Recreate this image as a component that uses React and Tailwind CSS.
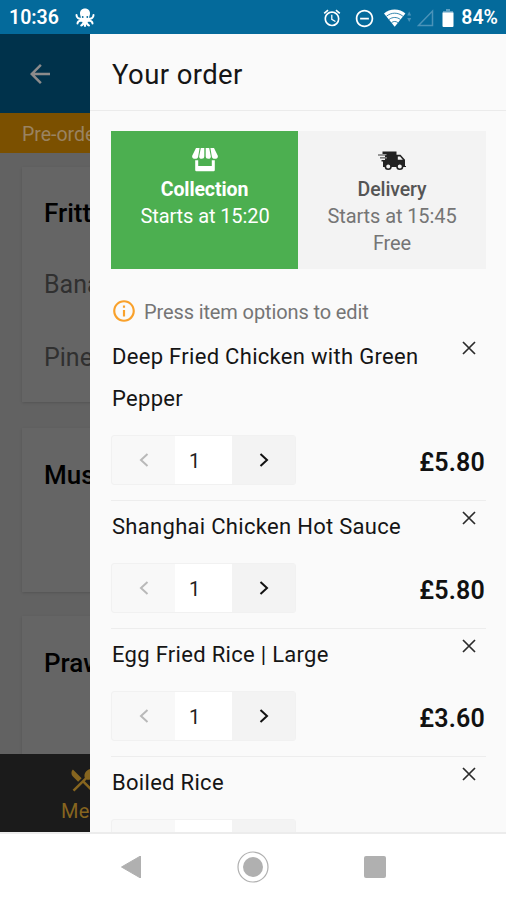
import React, { useState } from 'react';
import { MdAlarm, MdRemoveCircleOutline, MdArrowBack, MdInfoOutline, MdRestaurantMenu } from 'react-icons/md';

const initialItems = [
  { id: 1, name: 'Deep Fried Chicken with Green Pepper', price: 5.8, qty: 1 },
  { id: 2, name: 'Shanghai Chicken Hot Sauce', price: 5.8, qty: 1 },
  { id: 3, name: 'Egg Fried Rice | Large', price: 3.6, qty: 1 },
  { id: 4, name: 'Boiled Rice', price: 2.8, qty: 1 },
];

function OctopusIcon() {
  return (
    <svg width="20" height="20" viewBox="0 0 20 20" fill="none" stroke="white" strokeWidth="2" strokeLinecap="round">
      <path d="M10 .5C6.800.5 5 2.700 5 5.200c0 2 .8 3.300 1 4.800l.5 3.500h7L14 10c.2-1.500 1-2.800 1-4.800C15 2.700 13.200.5 10 .5z" fill="white" stroke="none" />
      <path d="M6.500 10.500C3.500 11.500 1.500 9.500 1.500 7M18.500 7c0 2.500-2 4.500-5 3.500M7.500 12.500C5 12.500 2.500 13 2.500 15.500M12.500 12.500c2.500 0 5 .5 5 3M8.500 13c.2 2-.5 4-2.300 4.500M10 13.500v4.500M11.500 13c0 2 .5 4 2.500 4.500" />
      <circle cx="7.700" cy="9" r=".9" fill="#046a9b" stroke="none" />
      <circle cx="12.300" cy="9" r=".9" fill="#046a9b" stroke="none" />
    </svg>
  );
}

function WifiIcon() {
  return (
    <svg width="28" height="18" viewBox="0 0 28 18">
      <path d="M0 4.500C3 1.800 6.500.5 10.700.5s7.700 1.300 10.700 4L10.700 17.800z" fill="white" />
      <path d="M2.500 7.200c5-4 11.400-4 16.400 0M5 10.500c3.500-2.700 7.900-2.700 11.400 0M7.500 13.600c2-1.500 4.400-1.500 6.400 0" fill="none" stroke="#046a9b" strokeWidth=".8" />
      <path d="M25.200 2.500l2 4h-4zM25.200 13l2-4h-4z" fill="#4a93b9" />
    </svg>
  );
}

function BatteryIcon() {
  return (
    <svg width="12" height="20" viewBox="0 0 12 20">
      <path d="M4 1h4v2h3v3H1V3h3z" fill="#5f9fc2" />
      <path d="M.5 4.500h11V18a1 1 0 0 1-1 1h-9a1 1 0 0 1-1-1z" fill="white" />
    </svg>
  );
}

function StoreIcon() {
  return (
    <svg width="26" height="24" viewBox="0 0 26 24" fill="currentColor">
      <path d="M4 0h3.600L6.200 8.500C6 10 5 10.800 3.200 10.800 1 10.800-.2 9.500.2 7.800zM8.800 0h3.500v8.300c0 1.700-.9 2.500-2.700 2.500s-2.600-1-2.400-2.500zM13.700 0h3.500l1.600 8.300c.2 1.500-.6 2.500-2.400 2.500s-2.700-.8-2.700-2.500zM18.400 0H22l3.800 7.800c.4 1.700-.8 3-3 3-1.800 0-2.800-.8-3-2.300z" />
      <path d="M3.200 12.300h3V18h13.600v-5.700h3V22a1.200 1.200 0 0 1-1.200 1.200H4.400A1.200 1.200 0 0 1 3.200 22z" />
    </svg>
  );
}

function TruckIcon() {
  return (
    <svg width="28" height="24" viewBox="0 0 28 24">
      <path d="M4.500 3.500h14v3.200h4l4.500 5V18h1v1H5v-5.500H3.500V12H7v-1.500H2V9h5V7.500H0V6h4.500z" fill="#222" />
      <path d="M19.800 8.500h2.300l2.700 3.200h-5z" fill="#f3f3f3" />
      <path d="M0 6.700h8.500M2 9.900h7" stroke="#f3f3f3" strokeWidth=".7" />
      <circle cx="10.200" cy="18.500" r="2.800" fill="#f3f3f3" stroke="#222" strokeWidth="1.600" />
      <circle cx="21.800" cy="18.500" r="2.800" fill="#f3f3f3" stroke="#222" strokeWidth="1.600" />
    </svg>
  );
}

function Chevron({ dir }) {
  return (
    <svg width="10" height="14" viewBox="0 0 10 14" fill="none" stroke="currentColor" strokeWidth="2">
      <path d={dir === 'left' ? 'M8.500 1L2 7l6.500 6' : 'M1.500 1L8 7l-6.500 6'} />
    </svg>
  );
}

function StatusBar() {
  return (
    <div className="h-[34px] shrink-0 bg-[#046a9b] text-white flex items-center pl-[9px] pr-2 pt-[2px]">
      <span className="text-[19.500px] font-semibold">10:36</span>
      <div className="ml-[16px]"><OctopusIcon /></div>
      <div className="ml-auto flex items-center">
        <MdAlarm className="size-5 mr-3" />
        <MdRemoveCircleOutline className="size-[21px] mr-[9px]" />
        <WifiIcon />
        <svg width="17" height="18" viewBox="0 0 17 18" className="ml-[5px] mr-[8px]">
          <path d="M15.500 2v14.500H1.500z" fill="none" stroke="#4a93b9" strokeWidth="1.500" />
        </svg>
        <BatteryIcon />
        <span className="ml-[7px] text-[19.500px] font-semibold">84%</span>
      </div>
    </div>
  );
}

// Menu page left behind the drawer, already dimmed
function MenuPage() {
  return (
    <div className="w-[90px] shrink-0 overflow-hidden flex flex-col bg-[#626262] whitespace-nowrap">
      <div className="h-[79px] shrink-0 bg-[#00324b] flex items-center pl-[25px]">
        <MdArrowBack className="size-[30px] text-[#8b8b8b]" />
      </div>
      <div className="h-10 shrink-0 bg-[#7b5000] text-[#9a8361] text-[19.500px] pl-[22px] pt-[3px] flex items-center">Pre-order</div>
      <div className="flex-1 min-h-0 overflow-hidden pl-[22px] pt-[14px]">
        <div className="w-80 h-[235px] bg-[#656565] shadow-sm pl-[22px]">
          <h2 className="text-[26px] font-medium leading-[32px] pt-[30px]">Fritters</h2>
          <p className="text-[25px] text-[#303030] leading-[32px] mt-[40px]">Banana Fritter</p>
          <p className="text-[25px] text-[#303030] leading-[32px] mt-[41px]">Pineapple Fritter</p>
        </div>
        <div className="w-80 h-[164px] mt-[26px] bg-[#656565] shadow-sm pl-[22px]">
          <h2 className="text-[26px] font-medium leading-[32px] pt-[31px]">Mushroom</h2>
        </div>
        <div className="w-80 h-[164px] mt-[24px] bg-[#656565] shadow-sm pl-[22px]">
          <h2 className="text-[26px] font-medium leading-[32px] pt-[31px]">Prawn</h2>
        </div>
      </div>
      <div className="h-[78px] shrink-0 bg-[#1b1b1b] text-[#86651f] pl-[61px] pt-[11px]">
        <MdRestaurantMenu className="size-[30px] ml-[7px]" />
        <p className="text-[20px] leading-[28px] tracking-[0.2px] pt-[2px]">Menu</p>
      </div>
    </div>
  );
}

function OrderItem({ item, onQty, onRemove }) {
  return (
    <div className="border-b border-[#ededed] pt-[5px] pb-[15px]">
      <div className="flex items-start justify-between">
        <h3 className="w-[320px] pl-px text-[22px] leading-[42px] tracking-[0.3px] text-[#151515]">{item.name}</h3>
        <button onClick={() => onRemove(item.id)} className="mt-[5px] mr-[10px] text-[#2b2b2b]">
          <svg width="14" height="14" viewBox="0 0 14 14" stroke="currentColor" strokeWidth="1.700" className="block">
            <path d="M1 1l12 12M13 1L1 13" />
          </svg>
        </button>
      </div>
      <div className="mt-[15px] flex items-center justify-between">
        <div className="w-[185px] h-[50px] flex border border-[#f1f1f1] rounded-[3px] bg-[#f8f8f8]">
          <button onClick={() => onQty(item.id, -1)} className="w-[63px] flex items-center justify-center text-[#b9b9b9]">
            <Chevron dir="left" />
          </button>
          <div className="w-[57px] bg-white pl-[14px] pt-[2px] flex items-center text-[20px] text-[#222]">{item.qty}</div>
          <button onClick={() => onQty(item.id, 1)} className="flex-1 flex items-center justify-center bg-[#f3f3f3] text-[#111]">
            <Chevron dir="right" />
          </button>
        </div>
        <span className="text-[25px] tracking-[0.2px] font-semibold text-[#111] pt-[5px] pr-px">£{item.price.toFixed(2)}</span>
      </div>
    </div>
  );
}

function OrderDrawer() {
  const [items, setItems] = useState(initialItems);
  const [method, setMethod] = useState('collection');

  const changeQty = (id, by) => {
    setItems(items.map((x) => (x.id === id ? { ...x, qty: Math.max(1, x.qty + by) } : x)));
  };
  const removeItem = (id) => setItems(items.filter((x) => x.id !== id));
  const active = 'bg-[#4caf50] text-white';
  const idle = 'bg-[#f3f3f3] text-[#757575]';

  return (
    <div className="flex-1 min-w-0 overflow-hidden bg-[#fafafa]">
      <div className="h-[77px] border-b border-[#ebebeb] pl-[22px] pt-[5px] flex items-center">
        <h1 className="text-[27.500px] tracking-[0.4px] text-[#151515]">Your order</h1>
      </div>
      <div className="pl-[21px] pr-[20px] pt-5">
        <div className="flex h-[138px] text-[20px] leading-[27px] text-center tracking-[-0.1px]">
          <button onClick={() => setMethod('collection')} className={`w-[187px] flex flex-col items-center pt-[17px] ${method === 'collection' ? active : idle}`}>
            <StoreIcon />
            <span className="font-bold mt-[4px] text-[19.500px]">Collection</span>
            <span className="pl-px">Starts at 15:20</span>
          </button>
          <button onClick={() => setMethod('delivery')} className={`flex-1 flex flex-col items-center pt-[17px] ${method === 'delivery' ? active : idle}`}>
            <TruckIcon />
            <span className="font-medium mt-[4px] text-[19.500px] text-[#555]">Delivery</span>
            <span>Starts at 15:45</span>
            <span>Free</span>
          </button>
        </div>

        <div className="mt-[29px] h-[26px] flex items-center text-[20px] tracking-[-0.12px] text-[#757575]">
          <MdInfoOutline className="size-[26px] text-[#f9a12b] mr-[7px]" />
          <span className="pt-px">Press item options to edit</span>
        </div>

        <div className="mt-[7px]">
          {items.map((item) => (
            <OrderItem key={item.id} item={item} onQty={changeQty} onRemove={removeItem} />
          ))}
        </div>
      </div>
    </div>
  );
}

function NavBar() {
  return (
    <div className="h-[68px] shrink-0 bg-white border-t-2 border-[#ececec] flex items-center justify-between pl-[121px] pr-[120px] pb-px">
      <svg width="21" height="22" viewBox="0 0 21 22" fill="#b0b0b0">
        <path d="M19.500 0v22L.5 11z" stroke="#b0b0b0" strokeLinejoin="round" />
      </svg>
      <svg width="32" height="32" viewBox="0 0 32 32">
        <circle cx="16" cy="16" r="15" fill="none" stroke="#b0b0b0" strokeWidth="1.200" />
        <circle cx="16" cy="16" r="10" fill="#b0b0b0" />
      </svg>
      <div className="size-[22px] bg-[#b0b0b0] rounded-[2px]" />
    </div>
  );
}

export default function App() {
  return (
    <div className="w-[506px] h-[900px] flex flex-col overflow-hidden font-['Roboto',sans-serif] text-black">
      <StatusBar />
      <div className="flex-1 min-h-0 flex">
        <MenuPage />
        <OrderDrawer />
      </div>
      <NavBar />
    </div>
  );
}
